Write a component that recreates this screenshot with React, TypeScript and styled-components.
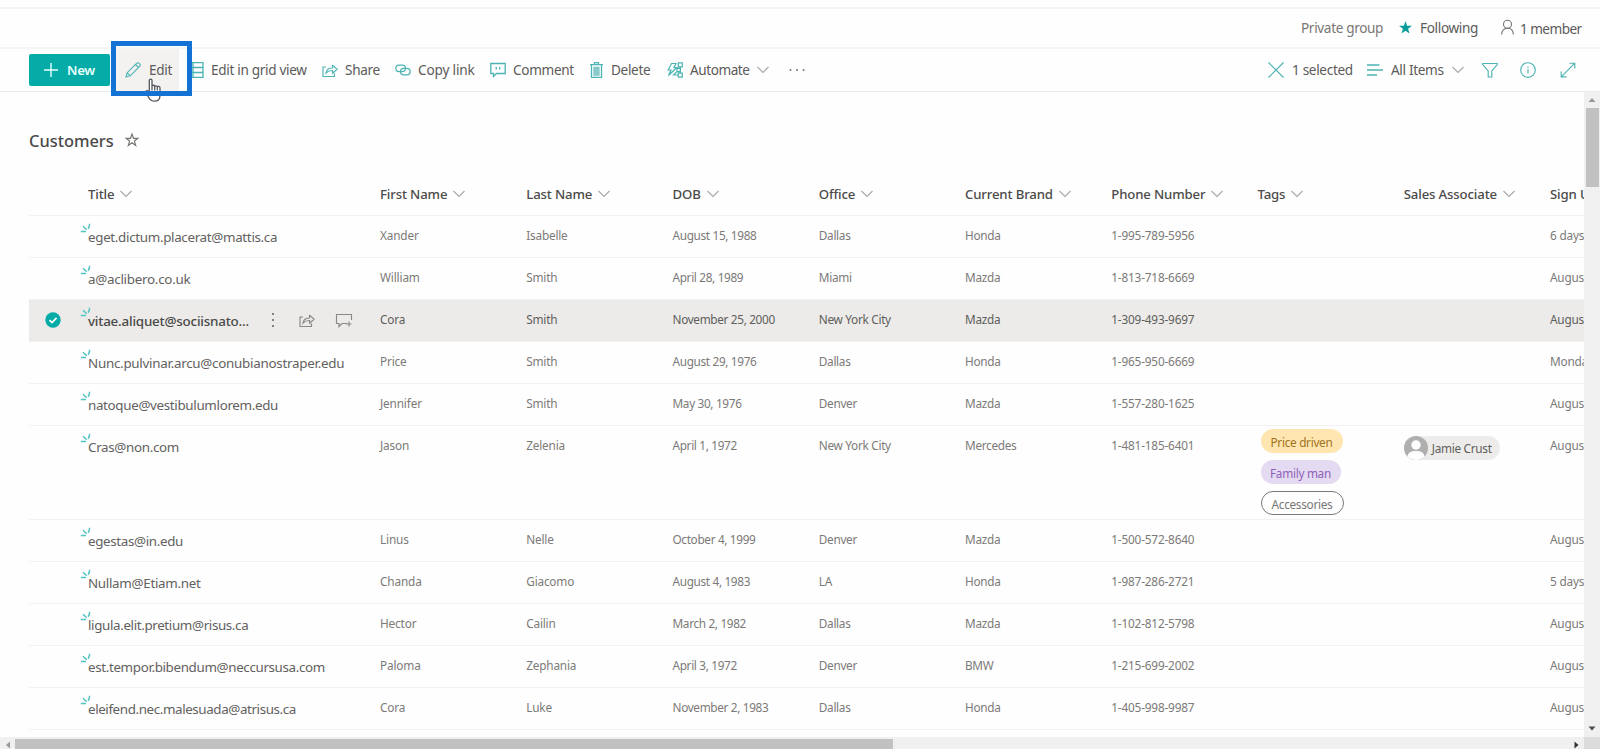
import React from "react";
import styled, { createGlobalStyle } from "styled-components";

const teal = "#4db3b3";

const GlobalStyle = createGlobalStyle`
  * { box-sizing: border-box; }
  body {
    margin: 0;
    background: #fefefe;
    font-family: "Noto Sans", "Open Sans", sans-serif;
    color: #5c5b5a;
    overflow: hidden;
  }
`;

const Page = styled.div`
  height: 749px;
  display: flex;
  flex-direction: column;
  position: relative;
  overflow: hidden;
`;

const TopStrip = styled.div`
  height: 9px;
  flex: none;
  border-bottom: 2px solid #f4f4f4;
`;

const GroupBar = styled.div`
  height: 40px;
  flex: none;
  display: flex;
  justify-content: flex-end;
  padding-right: 20px;
  border-bottom: 2px solid #f5f5f5;
`;

const GroupItem = styled.div<{ $w: number; $drop?: number; $tone?: string; $ls?: number; $gap?: number }>`
  width: ${(p) => p.$w}px;
  display: flex;
  align-items: center;
  gap: ${(p) => p.$gap ?? 0}px;
  padding-top: ${(p) => p.$drop ?? 0}px;
  padding-bottom: 2px;
  font-size: 13.6px;
  letter-spacing: ${(p) => p.$ls ?? -0.35}px;
  color: ${(p) => p.$tone ?? "#5c5b5a"};
  white-space: nowrap;
  svg { flex: none; }
`;

const CommandBar = styled.div`
  height: 43px;
  flex: none;
  display: flex;
  align-items: stretch;
  padding-left: 29px;
  border-bottom: 1px solid #ececec;
`;

const NewButton = styled.button`
  width: 81px;
  height: 32px;
  margin: 5px 6px 0 0;
  border: 0;
  border-radius: 2px;
  background: #05aba6;
  color: #e6fffd;
  display: flex;
  align-items: center;
  gap: 9px;
  padding: 0 0 0 15px;
  font: 600 13.2px "Noto Sans", "Open Sans", sans-serif;
  letter-spacing: -0.3px;
`;

const Command = styled.div<{ $w: number; $gap?: number; $pad?: number; $hover?: boolean; $ls?: number }>`
  width: ${(p) => p.$w}px;
  flex: none;
  display: flex;
  align-items: center;
  gap: ${(p) => p.$gap ?? 8}px;
  padding-left: ${(p) => p.$pad ?? 0}px;
  background: ${(p) => (p.$hover ? "#f3f2f1" : "transparent")};
  font-size: 13.6px;
  letter-spacing: ${(p) => p.$ls ?? -0.33}px;
  white-space: nowrap;
  svg { flex: none; }
`;

const CommandLabel = styled.span`
  margin-top: -2px;
`;

const Spacer = styled.div`
  flex: 1;
`;

const Highlight = styled.div`
  position: absolute;
  left: 111px;
  top: 41px;
  width: 81px;
  height: 55px;
  border: 5px solid #1372d3;
`;

const Pointer = styled.svg`
  position: absolute;
  left: 145px;
  top: 77px;
`;

const Content = styled.div`
  flex: 1;
  min-height: 0;
  display: flex;
`;

const ListArea = styled.main`
  width: 1584px;
  padding-left: 29px;
  overflow: hidden;
`;

const ListTitle = styled.h1`
  margin: 0;
  height: 80px;
  padding-top: 16px;
  display: flex;
  align-items: center;
  gap: 11px;
  font-size: 16.4px;
  font-weight: 500;
  color: #4a4948;
`;

const Row = styled.div<{ $h?: number; $selected?: boolean }>`
  width: 1675px;
  height: ${(p) => p.$h ?? 42}px;
  display: grid;
  grid-template-columns: 59px 292px repeat(9, 146.25px);
  border-top: 1px solid #f1f1f1;
  background: ${(p) => (p.$selected ? "#ecebe9" : "transparent")};
  color: ${(p) => (p.$selected ? "#605e5c" : "#7c7a78")};
`;

const HeaderRow = styled(Row)`
  height: 43px;
  border-top: 0;
`;

const HeaderCell = styled.div`
  display: flex;
  align-items: center;
  gap: 6px;
  padding-top: 1px;
  font-size: 13.2px;
  font-weight: 500;
  letter-spacing: -0.15px;
  color: #4c4b4a;
  white-space: nowrap;
`;

const Cell = styled.div<{ $ls?: number }>`
  font-size: 11.8px;
  line-height: 18px;
  letter-spacing: ${(p) => p.$ls ?? -0.2}px;
  padding-top: 10px;
  white-space: nowrap;
`;

const CheckCell = styled.div`
  padding: 12px 0 0 15.5px;
  svg { display: block; }
`;

const TitleCell = styled.div<{ $bold?: boolean }>`
  position: relative;
  display: flex;
  align-items: flex-start;
  padding-top: 11px;
  font-size: 13.4px;
  line-height: 20px;
  font-weight: ${(p) => (p.$bold ? 500 : 400)};
  color: ${(p) => (p.$bold ? "#4a4948" : "#636160")};
  white-space: nowrap;
`;

const TitleText = styled.span<{ $ls: number; $w?: number }>`
  letter-spacing: ${(p) => p.$ls}px;
  width: ${(p) => (p.$w ? p.$w + "px" : "auto")};
`;

const NewMark = styled.svg`
  position: absolute;
  left: -8px;
  top: 7px;
`;

const RowActions = styled.div`
  display: flex;
  align-items: center;
  gap: 20px;
  height: 18px;
`;

const Tags = styled.div`
  display: flex;
  flex-direction: column;
  align-items: flex-start;
  gap: 7px;
  padding: 3px 0 0 3px;
`;

const Pill = styled.span<{ $bg: string; $fg: string; $line?: string; $w: number }>`
  width: ${(p) => p.$w}px;
  height: 24px;
  padding-top: 1px;
  border-radius: 12px;
  display: flex;
  align-items: center;
  justify-content: center;
  background: ${(p) => p.$bg};
  color: ${(p) => p.$fg};
  border: 1px solid ${(p) => p.$line ?? "transparent"};
  font-size: 11.8px;
  letter-spacing: -0.3px;
`;

const Persona = styled.div`
  width: 96px;
  height: 24px;
  margin-top: 10px;
  border-radius: 12px;
  background: #edecea;
  display: flex;
  align-items: center;
  gap: 4px;
  font-size: 11.8px;
  letter-spacing: -0.3px;
  color: #605e5c;
  white-space: nowrap;
`;

const VerticalBar = styled.div`
  width: 16px;
  background: #f0f0f0;
  display: flex;
  flex-direction: column;
  align-items: center;
`;

const ArrowSlot = styled.div<{ $w: number; $h: number }>`
  width: ${(p) => p.$w}px;
  height: ${(p) => p.$h}px;
  flex: none;
  display: flex;
  align-items: center;
  justify-content: center;
`;

const VerticalThumb = styled.div`
  width: 13px;
  height: 79px;
  background: #c1c1c1;
`;

const HorizontalBar = styled.div`
  height: 12px;
  flex: none;
  display: flex;
  background: #f0f0f0;
`;

const HorizontalThumb = styled.div`
  width: 878px;
  margin-top: 2px;
  background: #c1c1c1;
`;

const Corner = styled.div`
  width: 16px;
  background: #dcdcdc;
`;

type SvgProps = {
  w?: number;
  h?: number;
  color?: string;
  sw?: number;
  children: React.ReactNode;
};

const Svg = ({ w = 16, h = 16, children, color = teal, sw = 1.15 }: SvgProps) => (
  <svg width={w} height={h} viewBox={`0 0 ${w} ${h}`} fill="none" stroke={color} strokeWidth={sw}>
    {children}
  </svg>
);

const Chevron = () => (
  <Svg w={12} h={8} color="#aaa9a8">
    <path d="M.5 1 6 6.5 11.5 1" />
  </Svg>
);

const ShareIcon = ({ color = teal }: { color?: string }) => (
  <Svg color={color}>
    <path d="M4 5H1v9.500h11.500v-3M4 11c.6-3.500 2.800-5 6.500-5V3.200h.2L15.200 7.300l-4.500 4V8.500C8 8.400 6 9 4 11Z" />
  </Svg>
);

const TriangleMark = ({ d, color }: { d: string; color: string }) => (
  <svg width="8" height="8" viewBox="0 0 8 8" fill={color}>
    <path d={d} />
  </svg>
);

const headers = [
  "First Name", "Last Name", "DOB", "Office", "Current Brand",
  "Phone Number", "Tags", "Sales Associate", "Sign Up Date",
];

const cellTracking = [-0.15, -0.2, -0.34, -0.3, -0.3, -0.18];

type Customer = {
  title: string;
  tracking: number;
  cells: string[];
  signUp: string;
  selected?: boolean;
  detailed?: boolean;
};

const customers: Customer[] = [
  { title: "eget.dictum.placerat@mattis.ca", tracking: -0.33, cells: ["Xander", "Isabelle", "August 15, 1988", "Dallas", "Honda", "1-995-789-5956"], signUp: "6 days ago" },
  { title: "a@aclibero.co.uk", tracking: -0.27, cells: ["William", "Smith", "April 28, 1989", "Miami", "Mazda", "1-813-718-6669"], signUp: "August 1" },
  { title: "vitae.aliquet@sociisnato...", tracking: -0.21, cells: ["Cora", "Smith", "November 25, 2000", "New York City", "Mazda", "1-309-493-9697"], signUp: "August 1", selected: true },
  { title: "Nunc.pulvinar.arcu@conubianostraper.edu", tracking: -0.27, cells: ["Price", "Smith", "August 29, 1976", "Dallas", "Honda", "1-965-950-6669"], signUp: "Monday" },
  { title: "natoque@vestibulumlorem.edu", tracking: -0.34, cells: ["Jennifer", "Smith", "May 30, 1976", "Denver", "Mazda", "1-557-280-1625"], signUp: "August 1" },
  { title: "Cras@non.com", tracking: -0.33, cells: ["Jason", "Zelenia", "April 1, 1972", "New York City", "Mercedes", "1-481-185-6401"], signUp: "August 1", detailed: true },
  { title: "egestas@in.edu", tracking: -0.35, cells: ["Linus", "Nelle", "October 4, 1999", "Denver", "Mazda", "1-500-572-8640"], signUp: "August 1" },
  { title: "Nullam@Etiam.net", tracking: -0.31, cells: ["Chanda", "Giacomo", "August 4, 1983", "LA", "Honda", "1-987-286-2721"], signUp: "5 days ago" },
  { title: "ligula.elit.pretium@risus.ca", tracking: -0.37, cells: ["Hector", "Cailin", "March 2, 1982", "Dallas", "Mazda", "1-102-812-5798"], signUp: "August 1" },
  { title: "est.tempor.bibendum@neccursusa.com", tracking: -0.36, cells: ["Paloma", "Zephania", "April 3, 1972", "Denver", "BMW", "1-215-699-2002"], signUp: "August 1" },
  { title: "eleifend.nec.malesuada@atrisus.ca", tracking: -0.4, cells: ["Cora", "Luke", "November 2, 1983", "Dallas", "Honda", "1-405-998-9987"], signUp: "August 1" },
];

const CustomerRow = ({ title, tracking, cells, signUp, selected, detailed }: Customer) => (
  <Row $selected={selected} $h={detailed ? 94 : 42}>
    <CheckCell>
      {selected && (
        <svg width="16" height="16" viewBox="0 0 16 16" fill="none">
          <circle cx="8" cy="8" r="7.700" fill="#05aba6" />
          <path d="m4.500 8.200 2.500 2.400 4.600-4.700" stroke="#fff" strokeWidth="1.800" />
        </svg>
      )}
    </CheckCell>
    <TitleCell $bold={selected}>
      <NewMark width="11" height="10" viewBox="0 0 11 10" fill="none" stroke="#52c4c1" strokeWidth="1.500">
        <path d="M.8 8.400h5.200M3 3.200l3.800 3.600M9.600.8c0 2-.3 3.600-1.500 4.800" />
      </NewMark>
      <TitleText $ls={tracking} $w={selected ? 179 : undefined}>{title}</TitleText>
      {selected && (
        <RowActions>
          <svg width="12" height="16" viewBox="0 0 12 16" fill="#605e5c">
            <circle cx="6" cy="2" r="1" /><circle cx="6" cy="8" r="1" /><circle cx="6" cy="14" r="1" />
          </svg>
          <ShareIcon color="#8a8886" />
          <Svg w={18} color="#8a8886">
            <path d="M16.500 8V2.500h-15v9H4v3l3-3h5M11.500 12h5M14 9.500v5" />
          </Svg>
        </RowActions>
      )}
    </TitleCell>
    {cells.map((c, i) => <Cell key={i} $ls={cellTracking[i]}>{c}</Cell>)}
    {detailed ? (
      <Tags>
        <Pill $w={82} $bg="#ffe5b0" $fg="#a07322">Price driven</Pill>
        <Pill $w={80} $bg="#e4daf2" $fg="#8d62b8">Family man</Pill>
        <Pill $w={83} $bg="#fefefe" $fg="#797775" $line="#7a7978">Accessories</Pill>
      </Tags>
    ) : <Cell />}
    {detailed ? (
      <Persona>
        <svg width="24" height="24" viewBox="0 0 24 24">
          <circle cx="12" cy="12" r="12" fill="#b0afae" />
          <circle cx="12" cy="9" r="4.700" fill="#fff" />
          <path d="M3.500 20.500C4 16.500 7 15 12 15s8 1.500 8.500 5.500A12 12 0 0 1 12 24a12 12 0 0 1-8.500-3.500Z" fill="#fff" />
        </svg>
        Jamie Crust
      </Persona>
    ) : <Cell />}
    <Cell>{signUp}</Cell>
  </Row>
);

export default function App() {
  return (
    <Page>
      <GlobalStyle />
      <TopStrip />
      <GroupBar>
        <GroupItem $w={98} $tone="#797775">Private group</GroupItem>
        <GroupItem $w={102} $gap={8}>
          <svg width="13" height="13" viewBox="0 0 13 13" fill="#0a9c9a">
            <path d="m6.500 0 1.600 4.700H13L9.100 7.700l1.400 4.900-4-2.900-4 2.900 1.400-4.900L0 4.700h4.900Z" />
          </svg>
          Following
        </GroupItem>
        <GroupItem $w={79} $drop={3} $gap={6} $ls={-0.55}>
          <svg width="13" height="19" viewBox="0 0 13 19" fill="none" stroke="#797775" strokeWidth="1.100">
            <circle cx="6.500" cy="5.200" r="4" />
            <path d="M.7 15.500c0-3.800 2.300-6.300 5.800-6.300s5.800 2.500 5.800 6.300" />
          </svg>
          1 member
        </GroupItem>
      </GroupBar>
      <CommandBar>
        <NewButton>
          <Svg w={14} h={14} color="#e6fffd" sw={1.4}><path d="M7 0v14M0 7h14" /></Svg>
          New
        </NewButton>
        <Command $w={63} $pad={9} $gap={8} $hover>
          <Svg><path d="m1 15 1.200-4.300L11.800 1.200c1.800-1.300 4.200 1 3 2.900L5.300 13.800ZM10.500 2.500l3 3M2.200 10.700l3.100 3.100" /></Svg>
          <CommandLabel>Edit</CommandLabel>
        </Command>
        <Command $w={143} $pad={9} $gap={7}>
          <Svg sw={1.3}><path d="M1 .7h14v14.600H1ZM1 5.500h14M1 10.500h14M5 .7v14.600" /></Svg>
          <CommandLabel>Edit in grid view</CommandLabel>
        </Command>
        <Command $w={73} $gap={7}><ShareIcon /><CommandLabel>Share</CommandLabel></Command>
        <Command $w={95} $gap={7} $ls={-0.15}>
          <Svg sw={1.25}>
            <rect x=".8" y="3" width="9.700" height="6.500" rx="3.250" />
            <rect x="5.500" y="6.300" width="9.700" height="6.500" rx="3.250" />
          </Svg>
          <CommandLabel>Copy link</CommandLabel>
        </Command>
        <Command $w={98} $gap={7}>
          <Svg sw={1.3}><path d="M.8 1.500h14.400V11.500H6.500L3.500 14.500v-3H.8ZM6.300 5v2.500M9.700 5v2.500M5.500 5.600h1M9 5.600h1" /></Svg>
          <CommandLabel>Comment</CommandLabel>
        </Command>
        <Command $w={79} $pad={2} $gap={8}>
          <Svg w={13} h={16} sw={1.3}>
            <path d="M0 2.700h13M4.500 2.500v-2h4v2M1.500 3v12.300h10V3" />
            <path d="M3.700 5h5.600v8.500H3.700Z" fill="#8acaca" strokeWidth=".4" />
          </Svg>
          <CommandLabel>Delete</CommandLabel>
        </Command>
        <Command $w={122} $gap={7} $ls={-0.45}>
          <Svg sw={1.2}>
            <path d="M4.500 1.500H9L7 5.500h2.700L1.500 13.500 4 8H1.200ZM11.300.8h4v4h-4ZM11.300 11.200h4v4h-4ZM10 6.300h3.400v3.400H10ZM13.300 4.800v6.400M11.300 13H6.500l3-3" />
          </Svg>
          <CommandLabel>Automate</CommandLabel>
          <Chevron />
        </Command>
        <Command $w={20}>
          <svg width="16" height="4" viewBox="0 0 16 4" fill="#797775">
            <circle cx="1.500" cy="2" r="1" /><circle cx="8" cy="2" r="1" /><circle cx="14.500" cy="2" r="1" />
          </svg>
        </Command>
        <Spacer />
        <Command $w={99}>
          <Svg><path d="m.5.5 15 15M15.500.5l-15 15" /></Svg>
          <CommandLabel>1 selected</CommandLabel>
        </Command>
        <Command $w={115}>
          <Svg sw={1.3}><path d="M0 3h12.500M0 8h16M0 13h10" /></Svg>
          <CommandLabel>All Items</CommandLabel>
          <Chevron />
        </Command>
        <Command $w={38}><Svg><path d="M.7 1.500h14.600v1L9.800 9v6H6.200V9L.7 2.500Z" /></Svg></Command>
        <Command $w={40}>
          <Svg><circle cx="8" cy="8" r="7.300" /><path d="M8 7v4.500M8 4.500V6" /></Svg>
        </Command>
        <Command $w={40}>
          <Svg><path d="M1.200 14.800 14.800 1.200M9.500 1.200h5.300v5.300M1.200 9.500v5.300h5.300" /></Svg>
        </Command>
      </CommandBar>
      <Content>
        <ListArea>
          <ListTitle>
            Customers
            <Svg w={14} h={14} color="#797775">
              <path d="m7 1 1.500 4.300H13L9.400 8l1.300 4.500L7 9.800l-3.700 2.700L4.600 8 1 5.300h4.500Z" />
            </Svg>
          </ListTitle>
          <HeaderRow>
            <div />
            <HeaderCell>Title<Chevron /></HeaderCell>
            {headers.map((h) => <HeaderCell key={h}>{h}<Chevron /></HeaderCell>)}
          </HeaderRow>
          {customers.map((c) => <CustomerRow key={c.title} {...c} />)}
          <Row />
        </ListArea>
        <VerticalBar>
          <ArrowSlot $w={16} $h={16}><TriangleMark color="#9a9a9a" d="M.5 6 4 2l3.500 4Z" /></ArrowSlot>
          <VerticalThumb />
          <Spacer />
          <ArrowSlot $w={16} $h={18}><TriangleMark color="#4d4d4d" d="M.5 2.500 4 6.500l3.500-4Z" /></ArrowSlot>
        </VerticalBar>
      </Content>
      <HorizontalBar>
        <ArrowSlot $w={15} $h={16}><TriangleMark color="#9a9a9a" d="M6 .5 2 4l4 3.500Z" /></ArrowSlot>
        <HorizontalThumb />
        <Spacer />
        <ArrowSlot $w={16} $h={16}><TriangleMark color="#333" d="M2.500.5 6.500 4l-4 3.500Z" /></ArrowSlot>
        <Corner />
      </HorizontalBar>
      <Pointer width="18" height="26" viewBox="0 0 18 26" fill="#fff" stroke="#55555f" strokeWidth="1.300">
        <path d="M4.300 14.500V3.600c0-2 2.700-2 2.700 0v5.700c.3-1.500 2.600-1.400 2.700.3.400-1.200 2.500-1.100 2.600.5.600-1.200 2.700-.8 2.700.9v7.500c0 3.400-2.200 5.700-5.500 5.700-3 0-4.500-1.300-6-4L1 15.500c-.8-1.600 1.300-2.600 2.300-1.200ZM7 9.300v4.200M9.700 9.600v3.900M12.300 10.100v3.400" />
      </Pointer>
      <Highlight />
    </Page>
  );
}
